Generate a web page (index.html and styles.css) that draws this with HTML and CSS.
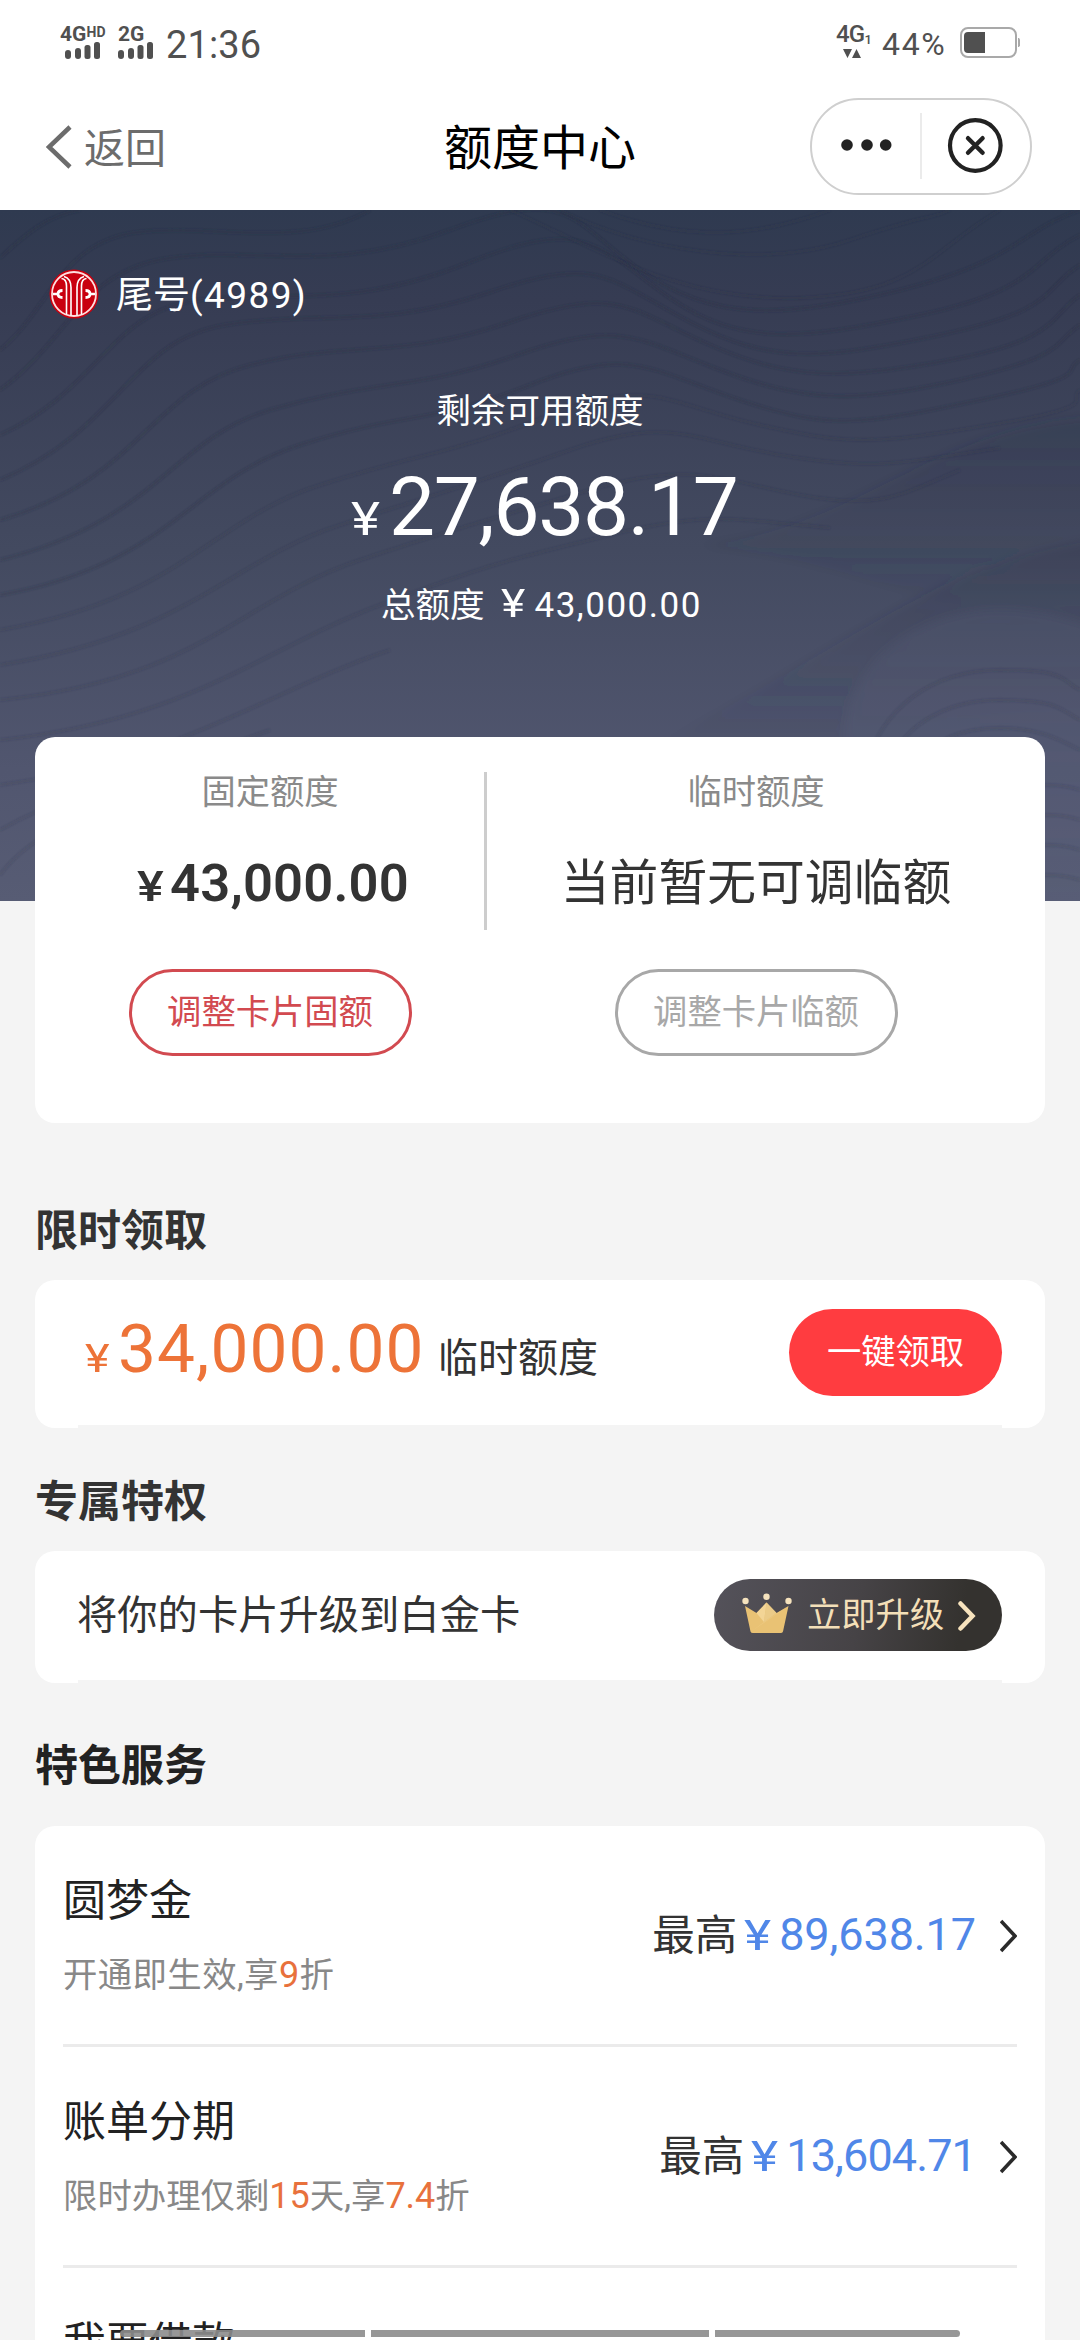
FILE: index.html
```html
<!DOCTYPE html>
<html lang="zh-CN">
<head>
<meta charset="utf-8">
<title>额度中心</title>
<link rel="stylesheet" href="styles.css">
</head>
<body>
<div class="screen">
  <header class="statusbar">
    <div class="sim sim-a">
      <div class="net">4G<span class="hd">HD</span></div>
      <svg class="bars" width="36" height="17" viewBox="0 0 36 17"><g fill="#505050"><rect x="0" y="8" width="6" height="9" rx="3"/><rect x="10" y="6" width="6" height="11" rx="3"/><rect x="19.500" y="3" width="6" height="14" rx="2.500"/><rect x="29" y="0" width="6" height="17" rx="2.500"/></g></svg>
    </div>
    <div class="sim sim-b">
      <div class="net">2G</div>
      <svg class="bars" width="36" height="17" viewBox="0 0 36 17"><g fill="#505050"><rect x="0" y="8" width="6" height="9" rx="3"/><rect x="10" y="6" width="6" height="11" rx="3"/><rect x="19.500" y="3" width="6" height="14" rx="2.500"/><rect x="29" y="0" width="6" height="17" rx="2.500"/></g></svg>
    </div>
    <div class="clock">21:36</div>
    <div class="data">
      <div class="datanet">4G<span class="slot">1</span></div>
      <svg class="arrows" width="18" height="9" viewBox="0 0 18 9"><path d="M0 0h9L4.500 9zM9 9h9L13.500 0z" fill="#505050"/></svg>
    </div>
    <div class="percent">44%</div>
    <svg class="battery" width="60" height="31" viewBox="0 0 60 31"><rect x="1" y="1" width="55" height="29" rx="7" fill="none" stroke="#a9a9a9" stroke-width="2"/><path d="M8 5h17v21H8a4 4 0 0 1-4-4V9a4 4 0 0 1 4-4z" fill="#505050"/><path d="M58 11h1l1 1.500v6L59 20h-1z" fill="#a9a9a9"/></svg>
  </header>

  <nav class="navbar">
    <div class="back">
      <svg width="26" height="44" viewBox="0 0 26 44"><path d="M24 2 3 22l21 20" fill="none" stroke="#6c6c6c" stroke-width="4.500"/></svg>
      <span>返回</span>
    </div>
    <h1 class="title">额度中心</h1>
    <div class="capsule">
      <svg width="222" height="97" viewBox="0 0 222 97"><rect x="1" y="1" width="220" height="95" rx="47.500" fill="#fff" stroke="#cfcfcf" stroke-width="2"/><path d="M111 15v66" stroke="#e4e4e4" stroke-width="1.500"/><g fill="#222"><circle cx="37" cy="47" r="5.800"/><circle cx="57" cy="47" r="5.800"/><circle cx="75.700" cy="47" r="5.800"/></g><g fill="none" stroke="#222"><circle cx="165.300" cy="47.500" r="25.300" stroke-width="4.200"/><path d="m158 40.200 14.600 14.600m0-14.600L158 54.800" stroke-width="4.400" stroke-linecap="round"/></g></svg>
    </div>
  </nav>

  <section class="hero">
    <svg class="waves" width="1080" height="691" viewBox="0 0 1080 691">
      <defs>
        <linearGradient id="fold" x1="0" y1="0" x2="0" y2="1"><stop offset="0" stop-color="#2c3247" stop-opacity=".22"/><stop offset="1" stop-color="#2c3247" stop-opacity="0"/></linearGradient>
        <linearGradient id="hill" x1="0" y1="0" x2="0" y2="1"><stop offset="0" stop-color="#666b88" stop-opacity=".16"/><stop offset="1" stop-color="#666b88" stop-opacity=".08"/></linearGradient>
        <filter id="soft" x="-5%" y="-5%" width="110%" height="110%"><feGaussianBlur stdDeviation="5"/></filter>
        <filter id="fine" x="-5%" y="-5%" width="110%" height="110%"><feGaussianBlur stdDeviation="1.200"/></filter>
      </defs>
      <g filter="url(#soft)">
        <path d="M700 335C860 320 930 215 1100 208V400C960 430 880 350 700 335z" fill="url(#fold)"/>
        <path d="M640 540C840 450 930 350 1100 330V500C960 500 840 540 640 540z" fill="url(#fold)"/>
        <path d="M845 530C845 450 920 400 1000 400Q1050 400 1100 420V710H845z" fill="url(#hill)"/>
      </g>
      <g fill="none" stroke="#262c42" stroke-opacity=".24" stroke-width="3" filter="url(#fine)">
        <path d="M0 48C30 20 50 5 80 0"/>
        <path d="M0 140C50 100 60 30 140 22S300 40 370 0"/>
        <path d="M0 180C70 130 80 60 170 48S330 65 450 20 570 10 640 60 780 110 900 80 1020 20 1080 0"/>
        <path d="M0 225C100 180 110 100 200 90S350 100 470 52 600 40 670 88 800 130 920 105 1030 50 1080 25"/>
        <path d="M0 270C120 220 130 130 225 115S380 120 490 82 610 70 690 112 820 150 940 125 1040 80 1080 55"/>
        <path d="M0 310C140 270 150 180 250 155S400 150 510 112 630 100 710 135 840 170 950 150 1050 105 1080 85"/>
        <path d="M0 350C160 310 170 230 270 200S420 180 520 144 640 130 720 160 850 195 960 170 1050 135 1080 115"/>
        <path d="M0 385C170 355 190 270 300 235S430 215 530 175 650 160 740 190 860 215 980 190 1060 160 1080 150"/>
      </g>
      <g fill="none" stroke="#262c42" stroke-opacity=".16" stroke-width="3" filter="url(#fine)">
        <path d="M0 420C180 390 210 310 320 275S450 245 550 205 670 195 760 215 870 235 990 215 1065 190 1080 180"/>
        <path d="M0 455C190 425 230 350 340 315S470 275 570 240 690 230 780 245 890 255 1000 238"/>
        <path d="M0 490C200 470 240 390 360 350S490 310 590 280 720 270 800 285 900 285 960 260"/>
        <path d="M0 530C190 510 260 440 380 395S510 350 610 325 740 310 830 318"/>
        <path d="M0 575C180 550 270 480 390 440"/>
        <path d="M0 620C80 575 160 560 270 520"/>
        <path d="M0 665C40 610 120 595 220 570"/>
        <path d="M560 0C640 40 760 60 850 30S930 10 950 0"/>
        <path d="M600 0C680 30 750 30 830 0"/>
        <path d="M510 0C600 40 680 92 800 88S930 40 1000 0"/>
        <path d="M885 560C900 520 940 490 1000 490S1060 500 1080 510"/>
        <path d="M865 560C880 500 930 460 1000 460S1060 470 1080 480"/>
        <path d="M910 560C930 530 960 518 1000 518S1060 530 1080 540"/>
        <path d="M1010 580Q1050 570 1080 580M1010 610Q1050 600 1080 610M1010 640Q1050 630 1080 640M1010 670Q1050 660 1080 670"/>
      </g>
    </svg>
    <div class="account">
      <svg width="50" height="50" viewBox="0 0 50 50"><circle cx="25" cy="25" r="24.500" fill="#c9000f"/><circle cx="25" cy="25" r="22" fill="none" stroke="#ffdede" stroke-width="1.800"/><g fill="none" stroke="#fff" stroke-width="1.600"><path d="M12.500 9.500Q17.500 10 17.500 17v28.500M15 7.500Q22 9.500 22 18.500v28M37.500 9.500Q32.500 10 32.500 17v28.500M35 7.500Q28 9.500 28 18.500v28"/></g><g fill="none" stroke="#fff" stroke-width="2.800"><path d="M13.500 21.500Q9 21.500 9 25t4.500 3.500M36.500 21.500Q41 21.500 41 25t-4.500 3.500"/></g><path d="M4 25h5M41 25h5" stroke="#fff" stroke-width="2.400"/></svg>
      <span class="tail">尾号<span class="tailno">(4989)</span></span>
    </div>
    <div class="label">剩余可用额度</div>
    <div class="balance"><span class="yen">¥</span><span class="figure">27,638.17</span></div>
    <div class="total"><span>总额度</span><span class="yen">¥</span><span class="figure">43,000.00</span></div>
  </section>

  <section class="card limits">
    <div class="limit fixed">
      <div class="caption">固定额度</div>
      <div class="value"><span class="yen">¥</span><span class="figure">43,000.00</span></div>
      <div class="pill pill-red">调整卡片固额</div>
    </div>
    <div class="rule"></div>
    <div class="limit temp">
      <div class="caption">临时额度</div>
      <div class="value">当前暂无可调临额</div>
      <div class="pill pill-gray">调整卡片临额</div>
    </div>
  </section>

  <h2 class="heading h-claim">限时领取</h2>
  <section class="card claim">
    <div class="offer"><span class="yen">¥</span><span class="figure">34,000.00</span><span class="kind">临时额度</span></div>
    <div class="claim-btn">一键领取</div>
  </section>

  <h2 class="heading h-perk">专属特权</h2>
  <section class="card perk">
    <div class="perk-text">将你的卡片升级到白金卡</div>
    <div class="upgrade">
      <svg class="crown" width="50" height="41" viewBox="0 0 50 41"><path d="M3 13 8.500 38.500Q9 40 11 40H38.500Q40.500 40 41 38.500L46.500 13 34.500 20 24.500 9.500 14.500 20z" fill="#e9c274"/><path d="M24.500 9.500 14.500 20 22 29z" fill="#f3d596"/><path d="M24.500 9.500 34.500 20 22 29z" fill="#ebcb88"/><path d="M46.500 13 22 29 10 38z" fill="#edca83"/><g fill="#f5e2bd"><circle cx="3.500" cy="8" r="3.200"/><circle cx="24.500" cy="3.800" r="3.200"/><circle cx="46.500" cy="8" r="3.200"/></g></svg>
      <span>立即升级</span>
      <svg class="more" width="18" height="30" viewBox="0 0 18 30"><path d="m2.500 2.500 12 12.500-12 12.500" fill="none" stroke="#f7e3bd" stroke-width="4.500" stroke-linecap="round"/></svg>
    </div>
  </section>

  <h2 class="heading h-service">特色服务</h2>
  <section class="card services">
    <div class="service">
      <div class="info">
        <div class="name">圆梦金</div>
        <div class="desc desc-a">开通即生效,享<b>9</b>折</div>
      </div>
      <div class="quota"><span>最高</span><span class="yen">¥</span><span class="figure">89,638.17</span>
        <svg class="go" width="17" height="34" viewBox="0 0 17 34"><path d="m1 2 14 15L1 32" fill="none" stroke="#2a2a2a" stroke-width="3.600"/></svg></div>
    </div>
    <div class="service">
      <div class="info">
        <div class="name">账单分期</div>
        <div class="desc">限时办理仅剩<b>15</b>天,享<b>7.4</b>折</div>
      </div>
      <div class="quota"><span>最高</span><span class="yen">¥</span><span class="figure figure-b">13,604.71</span>
        <svg class="go" width="17" height="34" viewBox="0 0 17 34"><path d="m1 2 14 15L1 32" fill="none" stroke="#2a2a2a" stroke-width="3.600"/></svg></div>
    </div>
    <div class="service">
      <div class="info"><div class="name">我要借款</div></div>
    </div>
  </section>
  <div class="gesture"><i></i><i></i><i></i></div>
</div>
</body>
</html>
```
FILE: styles.css
```css
* { box-sizing: border-box; }
body {
  margin: 0;
  background: #f4f4f4;
  font-family: Roboto, "Noto Sans CJK SC", sans-serif;
  color: #333;
}
svg { display: block; flex: none; }
.screen {
  position: relative;
  width: 1080px;
  height: 2340px;
  overflow: hidden;
  white-space: nowrap;
}
h1, h2 { margin: 0; }
.yen { transform: scaleX(1.2); transform-origin: 0 50%; }

/* status bar */
.statusbar {
  height: 85px;
  background: #fff;
  display: flex;
  align-items: flex-start;
  color: #505050;
}
.net { height: 15px; line-height: 15px; font-size: 21px; font-weight: 700; display: flex; }
.hd { font-size: 14px; line-height: 11px; letter-spacing: .3px; }
.sim { padding-top: 27px; }
.sim-a { margin-left: 60px; width: 58px; }
.sim-a .bars { margin-left: 5px; }
.sim-b { width: 48px; }
.clock { margin-top: 22px; line-height: 46px; font-size: 38px; letter-spacing: .1px; }
.data { margin-left: auto; padding-top: 26px; width: 46px; }
.datanet { height: 17px; line-height: 17px; font-size: 24px; font-weight: 500; display: flex; letter-spacing: -.8px; }
.slot { font-size: 13px; line-height: 27px; }
.arrows { margin: 6px 0 0 7px; }
.percent { width: 78px; margin-top: 25px; line-height: 38px; font-size: 32px; letter-spacing: 1.7px; }
.battery { margin: 27px 60px 0 0; }

/* title bar */
.navbar {
  height: 125px;
  background: #fff;
  display: grid;
  grid-template-columns: 400px 280px 1fr;
}
.back { display: flex; padding: 40px 0 0 46px; height: 125px; color: #6c6c6c; font-size: 41px; line-height: 48px; }
.back span { margin-left: 12px; }
.title { font-size: 48px; font-weight: 400; color: #000; text-align: center; line-height: 60px; padding-top: 34px; }
.capsule { padding: 13px 0 0 130px; }

/* balance */
.hero {
  position: relative;
  height: 691px;
  background: linear-gradient(#2f3a50 0, #363c53 90px, #434a60 340px, #51566f 560px, #575c74 691px);
  color: #fff;
}
.waves { position: absolute; left: 0; top: 0; }
.account, .label, .balance, .total { position: relative; display: flex; }
.account { padding: 59px 0 0 49px; height: 176px; }
.tail { margin-left: 17px; font-size: 37px; line-height: 53px; }
.tailno { letter-spacing: 1.4px; }
.label { justify-content: center; font-size: 34.5px; line-height: 50px; height: 76px; }
.balance { height: 112px; padding-left: 351px; align-items: baseline; line-height: 91px; }
.balance .yen { font-size: 46px; width: 38px; }
.balance .figure { font-size: 82px; letter-spacing: -1.3px; }
.total { padding-left: 381px; align-items: baseline; font-size: 34.5px; line-height: 60px; }
.total .yen { font-size: 38.5px; margin-left: 16px; width: 34px; }
.total .figure { font-size: 35px; letter-spacing: 1.5px; }

/* cards */
.card { position: relative; margin: 0 35px; background: #fff; border-radius: 20px; }
.limits {
  margin-top: -164px;
  height: 386px;
  display: grid;
  grid-template-columns: 449px 3px 1fr;
  padding-top: 30px;
}
.rule { height: 158px; margin-top: 5px; background: #cdcdcd; }
.limit { display: flex; flex-direction: column; align-items: center; }
.fixed { padding-left: 21px; }
.temp { padding-right: 20px; }
.caption { font-size: 34.3px; line-height: 50px; color: #8a8a8a; height: 81px; }
.value { font-size: 48.8px; line-height: 72px; height: 121px; }
.fixed .value { display: flex; align-items: baseline; font-weight: 600; padding-left: 6px; line-height: 70px; }
.fixed .yen { font-size: 42px; width: 33px; font-weight: 500; }
.fixed .figure { font-size: 52.5px; letter-spacing: .2px; }
.pill {
  width: 283px;
  height: 87px;
  border: 3px solid;
  border-radius: 44px;
  font-size: 34.3px;
  line-height: 80px;
  text-align: center;
}
.pill-red { color: #d24a50; }
.pill-gray { color: #a8a8a8; }

.heading { margin-left: 35px; font-size: 43px; line-height: 62px; font-weight: 700; }
.h-claim { margin-top: 77px; height: 80px; }
.claim {
  height: 148px;
  display: flex;
  justify-content: space-between;
  padding: 29px 43px 0 50px;
}
.claim::after, .perk::after {
  content: "";
  position: absolute;
  left: 43px;
  right: 43px;
  bottom: 0;
  height: 3px;
  background: #f4f4f4;
}
.offer { display: flex; align-items: baseline; line-height: 80px; }
.offer .yen { font-size: 39px; width: 33px; color: #ed7338; }
.offer .figure { font-size: 67.5px; width: 320px; color: #ed7338; letter-spacing: 1.1px; }
.kind { font-size: 40px; }
.claim-btn {
  width: 213px;
  height: 87px;
  border-radius: 44px;
  background: #ff3c40;
  color: #fff;
  font-size: 34.3px;
  line-height: 86px;
  text-align: center;
}
.h-perk { margin-top: 43px; height: 80px; }
.perk { height: 132px; display: flex; justify-content: space-between; padding: 28px 43px 0 42px; }
.perk-text { font-size: 40.3px; line-height: 73px; }
.upgrade {
  width: 288px;
  height: 72px;
  border-radius: 36px;
  background: linear-gradient(100deg, #54525a, #464346 50%, #34322f 85%);
  display: flex;
  padding-left: 28px;
  color: #f3dfb8;
  font-size: 34.3px;
  line-height: 72px;
}
.crown { margin: 14px 15px 0 0; }
.more { margin: 22px 0 0 14px; }

.h-service { margin-top: 52px; height: 91px; color: #222; }
.services { height: 560px; padding: 0 28px; }
.service { height: 221px; display: flex; justify-content: space-between; border-bottom: 3px solid #ebebeb; }
.name { font-size: 43px; line-height: 60px; padding-top: 45px; color: #222; }
.desc { font-size: 34.4px; line-height: 50px; margin-top: 19px; color: #888; }
.desc-a { letter-spacing: .4px; }
.desc b { font-weight: 400; color: #e8713c; font-size: 36px; }
.quota { display: flex; align-items: baseline; font-size: 42.5px; line-height: 60px; padding-top: 79px; }
.quota .yen { color: #5087e8; font-size: 43px; margin-left: 7px; width: 35px; }
.quota .figure { color: #5087e8; font-size: 45px; letter-spacing: -.1px; }
.quota .figure-b { letter-spacing: -.9px; }
.go { margin: 14px 0 0 24px; align-self: flex-start; }

/* gesture hints over the content */
.gesture { position: absolute; left: 120px; top: 2330px; display: flex; gap: 6px; }
.gesture i { height: 7px; width: 338px; background: #8c8c8ce6; }
.gesture i:first-child { width: 245px; border-radius: 4px 0 0 4px; }
.gesture i:last-child { width: 245px; border-radius: 0 4px 4px 0; }
```
